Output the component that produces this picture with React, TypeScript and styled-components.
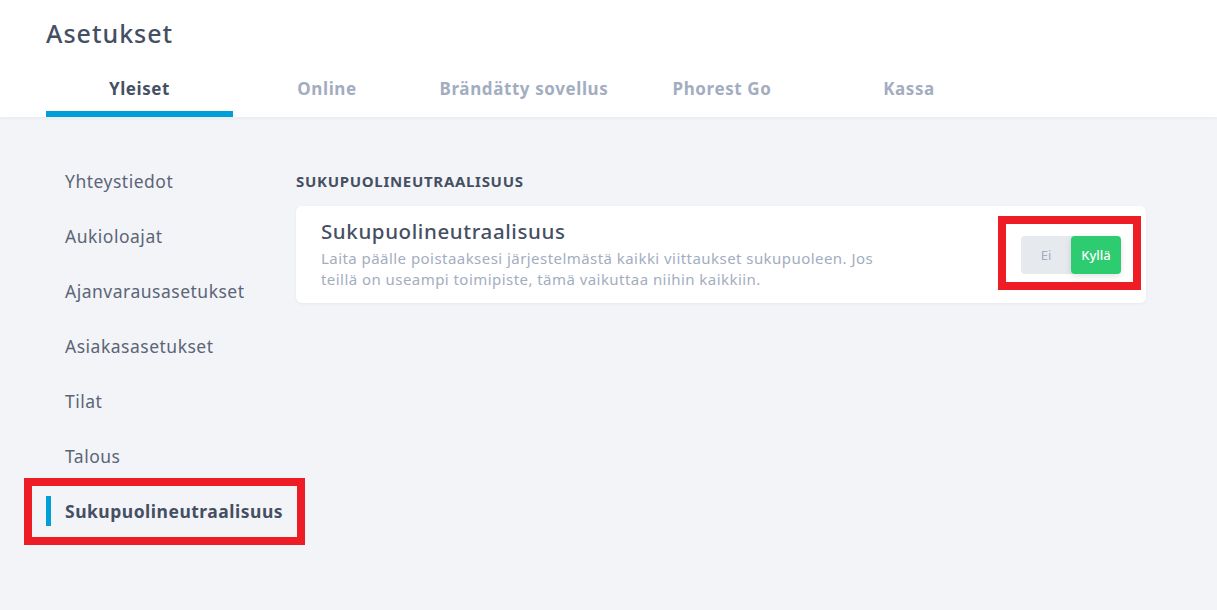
import styled, {createGlobalStyle} from "styled-components";

const GlobalStyle = createGlobalStyle`
  body {
    margin: 0;
    background: #f3f4f7;
    font-family: "Noto Sans", "Open Sans", sans-serif;
    color: #454f63;
  }
`

const Page = styled.div`
  min-height: 610px;
`
const Header = styled.div`
  background: #ffffff;
  padding: 18px 46px 0 46px;
  box-shadow: 0 1px 4px rgba(40, 50, 70, 0.06);
`
const Title = styled.h1`
  margin: 0;
  font-size: 25px;
  line-height: 30px;
  font-weight: 500;
  letter-spacing: 1px;
  color: #454f63;
`
const Tabs = styled.div`
  display: flex;
`
const Tab = styled.div<{ $width: number; $active?: boolean }>`
  width: ${p => p.$width}px;
  padding: 29px 0 10px 0;
  text-align: center;
  font-size: 17px;
  line-height: 24px;
  font-weight: 700;
  letter-spacing: 0.6px;
  color: ${p => p.$active ? "#454f63" : "#a3adbf"};
  border-bottom: 6px solid ${p => p.$active ? "#009fd8" : "transparent"};
`
const Body = styled.div`
  display: flex;
  padding: 0 46px;
`
const Sidebar = styled.div`
  width: 250px;
  padding-top: 36px;
`
const NavItem = styled.div<{ $active?: boolean }>`
  position: relative;
  display: flex;
  align-items: center;
  height: 55px;
  font-size: 17.5px;
  letter-spacing: 0.5px;
  font-weight: ${p => p.$active ? 700 : 400};
  color: ${p => p.$active ? "#454f63" : "#5b6578"};
`
const Marker = styled.span<{ $visible?: boolean }>`
  width: 5px;
  height: 30px;
  margin-right: 14px;
  background: ${p => p.$visible ? "#009fd8" : "transparent"};
`
const Annotation = styled.div<{ $top: number; $left: number; $width: number; $height: number }>`
  position: absolute;
  top: ${p => p.$top}px;
  left: ${p => p.$left}px;
  width: ${p => p.$width}px;
  height: ${p => p.$height}px;
  box-sizing: border-box;
  border: 8px solid #ee1c25;
  pointer-events: none;
`
const Main = styled.div`
  width: 850px;
  padding-top: 55px;
`
const SectionHeading = styled.h2`
  margin: 0 0 16px 0;
  font-size: 15px;
  line-height: 18px;
  font-weight: 700;
  letter-spacing: 0.7px;
  color: #454f63;
`
const Card = styled.div`
  display: flex;
  align-items: center;
  justify-content: space-between;
  background: #ffffff;
  border-radius: 6px;
  padding: 14px 25px 13px 25px;
  box-shadow: 0 1px 3px rgba(40, 50, 70, 0.06);
`
const CardText = styled.div`
  width: 565px;
`
const CardTitle = styled.div`
  font-size: 20.5px;
  line-height: 22px;
  font-weight: 500;
  letter-spacing: 0.6px;
  color: #454f63;
  margin-bottom: 6px;
`
const CardDescription = styled.div`
  font-size: 15px;
  line-height: 21px;
  letter-spacing: 0.45px;
  color: #a3adbf;
`
const Toggle = styled.div`
  position: relative;
  display: flex;
  width: 100px;
  height: 38px;
  border-radius: 4px;
  background: #e6e9ee;
`
const ToggleOption = styled.div<{ $on?: boolean }>`
  flex: 1;
  display: flex;
  align-items: center;
  justify-content: center;
  border-radius: 4px;
  font-size: 13px;
  font-weight: ${p => p.$on ? 500 : 400};
  color: ${p => p.$on ? "#ffffff" : "#a3adbf"};
  background: ${p => p.$on ? "#2ecc71" : "transparent"};
  box-shadow: ${p => p.$on ? "0 2px 6px rgba(0, 0, 0, 0.12)" : "none"};
`

const tabs = [
    {label: "Yleiset", width: 187, active: true},
    {label: "Online", width: 188},
    {label: "Brändätty sovellus", width: 206},
    {label: "Phorest Go", width: 190},
    {label: "Kassa", width: 184},
]

const navItems = [
    "Yhteystiedot",
    "Aukioloajat",
    "Ajanvarausasetukset",
    "Asiakasasetukset",
    "Tilat",
    "Talous",
    "Sukupuolineutraalisuus",
]

export default () => {
    const activeNav = "Sukupuolineutraalisuus";

    return (
        <Page>
            <GlobalStyle/>
            <Header>
                <Title>Asetukset</Title>
                <Tabs>
                    {tabs.map(t => (
                        <Tab key={t.label} $width={t.width} $active={t.active}>{t.label}</Tab>
                    ))}
                </Tabs>
            </Header>

            <Body>
                <Sidebar>
                    {navItems.map(item => (
                        <NavItem key={item} $active={item === activeNav}>
                            <Marker $visible={item === activeNav}/>
                            {item}
                            {item === activeNav && <Annotation $top={-5} $left={-22} $width={281} $height={67}/>}
                        </NavItem>
                    ))}
                </Sidebar>

                <Main>
                    <SectionHeading>SUKUPUOLINEUTRAALISUUS</SectionHeading>
                    <Card>
                        <CardText>
                            <CardTitle>Sukupuolineutraalisuus</CardTitle>
                            <CardDescription>
                                Laita päälle poistaaksesi järjestelmästä kaikki viittaukset sukupuoleen. Jos
                                teillä on useampi toimipiste, tämä vaikuttaa niihin kaikkiin.
                            </CardDescription>
                        </CardText>
                        <Toggle>
                            <ToggleOption>Ei</ToggleOption>
                            <ToggleOption $on>Kyllä</ToggleOption>
                            <Annotation $top={-20} $left={-23} $width={143} $height={74}/>
                        </Toggle>
                    </Card>
                </Main>
            </Body>
        </Page>
    );
}
